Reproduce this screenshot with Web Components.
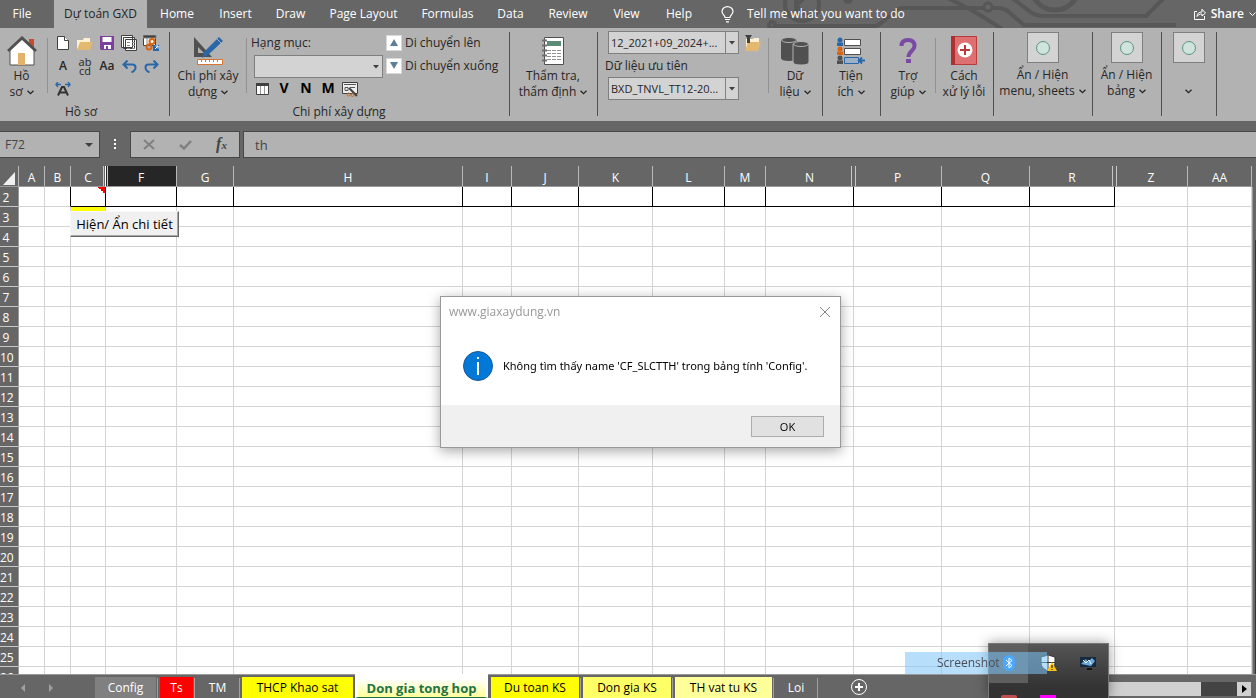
<!DOCTYPE html>
<html lang="vi">
<head>
<meta charset="utf-8">
<title>Dự toán GXD</title>
<style>
html,body{margin:0;height:100%}
body{font:12px/16px "Open Sans","Noto Sans",sans-serif;color:#262626;background:#666;overflow:hidden}
</style>
</head>
<body>
<gxd-workbook></gxd-workbook>

<script>
const BASE = `<style>
*{box-sizing:border-box}
:host{display:block}
button,select,input{font:inherit;color:inherit;margin:0;padding:0;border:0;background:none;border-radius:0}
svg{display:block}
</style>`;

function define(name, markup, setup) {
  const template = document.createElement('template');
  template.innerHTML = BASE + markup;
  customElements.define(name, class extends HTMLElement {
    connectedCallback() {
      if (this.shadowRoot) return;
      const root = this.attachShadow({ mode: 'open' });
      root.append(template.content.cloneNode(true));
      if (setup) setup(root, this);
    }
  });
}

/* ---------- menu bar ---------- */
define('menu-tab', `<style>
:host{display:flex;flex:0 0 auto;width:var(--w)}
button{flex:1;color:#fff;text-align:center;white-space:nowrap}
:host([active]) button{background:#b2b2b2;color:#262626}
</style><button type="button" role="tab"><slot></slot></button>`);

define('menu-bar', `<style>
:host{position:relative;background:#666;color:#fff;overflow:hidden}
.art{position:absolute;right:0;top:0}
nav{position:relative;display:flex;height:28px}
.file{margin-right:10px}
.tell{display:flex;align-items:center;gap:13px;padding:0 0 0 16px;white-space:nowrap}
.share{display:flex;align-items:center;gap:5px;margin-left:auto;font-weight:600;white-space:nowrap}
</style>
<svg class="art" width="516" height="28" viewBox="0 0 516 28" fill="none" stroke="#575757" stroke-width="4" aria-hidden="true">
<circle cx="62" cy="4" r="17"/><path d="M56 14V-2M56 6l12 10M56 6L68-6" stroke-width="4"/>
<circle cx="32" cy="25" r="3"/><path d="M36 26h98q4 0 7-3l12-10q5-5 10-5h80"/><circle cx="248" cy="7" r="4" stroke-width="3"/>
<path d="M252 8h8q6 1 10 5l14 12h152M208-2q20 10 32 17l22 14M272-2l20 15q5 3 9 3h105l20-20"/>
<circle cx="315" cy="-14" r="24" stroke-width="5"/><circle cx="108" cy="-1" r="3"/>
</svg>
<nav>
<menu-tab class="file" style="--w:44px">File</menu-tab>
<menu-tab active style="--w:93px">Dự toán GXD</menu-tab>
<menu-tab style="--w:60px">Home</menu-tab>
<menu-tab style="--w:57px">Insert</menu-tab>
<menu-tab style="--w:53px">Draw</menu-tab>
<menu-tab style="--w:93px">Page Layout</menu-tab>
<menu-tab style="--w:75px">Formulas</menu-tab>
<menu-tab style="--w:51px">Data</menu-tab>
<menu-tab style="--w:64px">Review</menu-tab>
<menu-tab style="--w:53px">View</menu-tab>
<menu-tab style="--w:52px">Help</menu-tab>
<button type="button" class="tell">
<svg width="13" height="17" viewBox="0 0 13 17" fill="none" stroke="#fff" stroke-width="1.2"><path d="M4 11.500C4 9 1 8.500 1 5.500a5.500 4.900 0 0 1 11 0c0 3-3 3.500-3 6zM4 13.500h5M5 15.800h3"/></svg>
<span>Tell me what you want to do</span></button>
<button type="button" class="share">
<svg width="12" height="12" viewBox="0 0 12 12" fill="none" stroke="#fff"><path d="M3 3.500H.5v8h10V8M3 8.500c0-3 2-4.500 5-4.500V1.200L11.500 5 8 8V6C5.500 6 4 6.800 3 8.500z"/></svg>
<span>Share</span>
<svg width="7" height="5" viewBox="0 0 7 5" fill="none" stroke="#fff"><path d="M.5.500l3 3 3-3"/></svg></button>
</nav>`);

/* ---------- ribbon parts ---------- */
define('ribbon-group', `<style>
:host{display:flex;flex:0 0 auto;width:var(--w);flex-direction:column;position:relative;padding-right:2px}
:host::after{content:"";position:absolute;right:0;top:4px;bottom:5px;width:1px;background:#505050}
.body{display:flex;height:76px}
.cap{text-align:center}
</style><div class="body"><slot></slot></div><div class="cap"><slot name="caption"></slot></div>`);

define('ribbon-rule', `<style>
:host{width:1px;flex:0 0 auto;margin-top:10px;height:55px;background:#919191}
</style>`);

define('big-button', `<style>
:host{display:flex;flex:1 1 0;min-width:0}
button{flex:1;min-width:0;display:flex;flex-direction:column;align-items:center;padding-top:5px;white-space:nowrap}
.icon{height:35px;display:flex;align-items:center}
.line{display:flex;align-items:center;justify-content:center;gap:4px;height:16px}
:host([boxed]) button{padding-top:4px}
:host([boxed]) .icon{width:32px;height:31px;justify-content:center;border:1px solid #7f7f7f;background:#d3d3d3;margin-bottom:4px}
:host([plain]) .arrow{display:none}
</style><button type="button"><span class="icon"><slot name="icon"></slot></span>
<span class="line"><slot name="top"></slot></span>
<span class="line"><slot></slot><svg class="arrow" width="7" height="5" viewBox="0 0 7 5" fill="none" stroke="#262626" stroke-width="1.300"><path d="M.5.700l3 3 3-3"/></svg></span></button>`);

define('icon-button', `<style>
:host{display:flex}
button{width:22px;height:22px;display:flex;align-items:center;justify-content:center;font-weight:600;line-height:10px}
:host([strong]) button{font-weight:700;font-size:14px;color:#000;padding-bottom:2px}
:host([pair]) button{font-size:11px;line-height:9px;font-weight:400}
</style><button type="button"><slot></slot></button>`);

define('move-button', `<style>
:host{display:flex}
button{display:flex;align-items:center;gap:3px;height:23px;white-space:nowrap}
i{width:16px;height:16px;background:#fff;border:1px solid #d8d8d8;display:grid;place-items:center}
</style><button type="button"><i><slot name="icon"></slot></i><slot></slot></button>`);

define('combo-box', `<style>
:host{display:grid;height:23px;width:var(--w)}
select,svg{grid-area:1/1}
select{appearance:none;width:100%;height:100%;border:1px solid #7f7f7f;background:#d3d3d3;padding:0 16px 0 2px;outline:0;font-size:11px}
svg{justify-self:end;pointer-events:none}
line{stroke:#7f7f7f}
:host(:not([split])) line{display:none}
</style><select><option></option></select>
<svg width="15" height="23" viewBox="0 0 15 23"><line x1="1.500" y1="0" x2="1.500" y2="23"/><path d="M5 10h6l-3 3.500z" fill="#404040"/></svg>`,
(root, host) => {
  root.querySelector('option').textContent = host.getAttribute('value') || '';
  root.querySelector('select').setAttribute('aria-label', host.getAttribute('label'));
});

const toggleIcon = '<svg slot="icon" width="16" height="16" viewBox="0 0 16 16"><circle cx="8" cy="8" r="6.500" fill="#d0e3dc" stroke="#5a9582"/></svg>';

define('ribbon-bar', `<style>
:host{display:flex;background:#b2b2b2;height:93px;overflow:hidden}
.tools{display:grid;grid-template-columns:repeat(5,22px);grid-auto-rows:23px;margin:4px 0 0 4px}
.item{display:grid;grid-template-rows:22px 24px 22px;margin:4px 0 0 4px;width:132px;align-items:center}
.item combo-box{margin-left:3px}
.marks{display:flex}
.moves{display:flex;flex-direction:column;margin:3px 0 0 3px}
.prio{display:grid;grid-template-columns:131px 22px;grid-auto-rows:23px;align-items:center;margin:3px 4px 0 7px;padding-left:3px;flex:none;column-gap:3px}
.prio span{margin-left:-3px}
</style>
<ribbon-group style="--w:170px">
<big-button style="flex:0 0 43px"><svg slot="icon" width="30" height="30" viewBox="0 0 30 30"><path d="M22 3h5v9l-5-5z" fill="#c94a2d"/><path d="M3 13L15 2l12 11v16H3z" fill="#fff" stroke="#505050"/><path d="M1 15L15 2l14 13" fill="none" stroke="#505050" stroke-width="3"/><path d="M11 17h7v12h-7z" fill="#e3b36c"/></svg><span slot="top">Hồ</span>sơ</big-button>
<ribbon-rule style="margin-left:4px"></ribbon-rule>
<div class="tools">
<icon-button><svg width="12" height="14" viewBox="0 0 12 14" fill="#fff" stroke="#404040"><path d="M.5.500h7l4 4v9H.5z"/><path d="M7.500.500v4h4"/></svg></icon-button>
<icon-button><svg width="16" height="13" viewBox="0 0 16 13"><path d="M0 12V3h6l1-2h6v4" fill="#fff0d4"/><path d="M0 13l3-8h13l-3 8z" fill="#e3b870"/></svg></icon-button>
<icon-button><svg width="14" height="14" viewBox="0 0 14 14"><path d="M0 0h14v14H1l-1-1z" fill="#7b3f9d"/><path d="M2.500 1h9v5h-9zM4 9h7v4H8v-3H6v3H4z" fill="#fff"/></svg></icon-button>
<icon-button><svg width="16" height="16" viewBox="0 0 16 16" fill="#fff" stroke="#404040"><path d="M.5.500h11v12H.5zM2.500 2.500h11v11h-11zM4.500 4.500h11v11h-11z"/><path d="M6 7.500h3m2 0h3M6 10.500h3m2 0h3M6 13.500h3m2 0h3" stroke="#888"/></svg></icon-button>
<icon-button><svg width="16" height="16" viewBox="0 0 16 16"><path d="M.5.500h12v10H.5z" fill="#fff" stroke="#404040"/><path d="M0 0h13v3H0zM4 3v7" fill="#404040" stroke="#888"/><circle cx="9" cy="6.500" r="2.500" fill="none" stroke="#d8660f" stroke-width="2"/><circle cx="6" cy="12" r="2.500" fill="none" stroke="#d8660f" stroke-width="2"/><path d="M10 10h6v6h-6z" fill="#2a67a8"/><path d="M12 14l3-3m-2.500 0H15v2.500" stroke="#fff" fill="none"/></svg></icon-button>
<icon-button>A</icon-button>
<icon-button pair>ab<br>cd</icon-button>
<icon-button>Aa</icon-button>
<icon-button><svg width="15" height="13" viewBox="0 0 15 13" fill="none" stroke="#2a67a8" stroke-width="2"><path d="M5.500.500L1.500 4.500l4 4M2 4.500h8.500q3 0 3 3t-4 5"/></svg></icon-button>
<icon-button><svg width="15" height="13" viewBox="0 0 15 13" fill="none" stroke="#2a67a8" stroke-width="2"><path d="M9.500.500l4 4-4 4M13 4.500H4.500q-3 0-3 3t4 5"/></svg></icon-button>
<icon-button><svg width="16" height="14" viewBox="0 0 16 14" fill="none"><path d="M3 13.500l4-8.500h2l4 8.500M5 10.500h6" stroke="#333" stroke-width="2"/><path d="M3 0L1 2.500 3 5M1 2.500h5M13 0l2 2.500L13 5M15 2.500h-5" stroke="#2a67a8" stroke-width="1.400"/></svg></icon-button>
</div><span slot="caption" style="margin-right:6px">Hồ sơ</span></ribbon-group>

<ribbon-group style="--w:340px">
<big-button style="flex:0 0 76px"><svg slot="icon" width="32" height="30" viewBox="0 0 32 30"><path d="M2 1v20h18zM6 11l6 6H6z" fill="#505050" fill-rule="evenodd"/><path d="M10 22l2-6L27 1l4 4-15 14z" fill="#2a67a8"/><path d="M25 3l4 4" stroke="#b2b2b2"/><path d="M5.500 23.500h25v5h-25z" fill="#fff" stroke="#d8762f"/><path d="M9.500 24v2m4-2v2m4-2v2m4-2v2m4-2v2" stroke="#d8762f"/></svg><span slot="top">Chi phí xây</span>dựng</big-button>
<ribbon-rule></ribbon-rule>
<div class="item"><span>Hạng mục:</span><combo-box label="Hạng mục" value="" style="--w:129px"></combo-box>
<div class="marks"><icon-button><svg width="13" height="12" viewBox="0 0 13 12"><path d="M.5.500h12v11H.5z" fill="#fff" stroke="#404040"/><path d="M0 0h13v3H0z" fill="#404040"/><path d="M4.500 3v8m4-8v8" stroke="#999"/></svg></icon-button>
<icon-button strong>V</icon-button><icon-button strong>N</icon-button><icon-button strong>M</icon-button>
<icon-button><svg width="16" height="15" viewBox="0 0 16 15"><path d="M.5.500h15v11H.5z" fill="#eee" stroke="#404040"/><path d="M2 2.500h12M3 5.500h3v3H3zM8 5.500h5" stroke="#555" fill="none"/><path d="M7 6l8 8" stroke="#404040" stroke-width="2"/><circle cx="6.500" cy="12.500" r="1.500" fill="none" stroke="#d8660f"/><circle cx="10.500" cy="13" r="1.500" fill="none" stroke="#d8660f"/></svg></icon-button></div></div>
<div class="moves">
<move-button><svg slot="icon" width="8" height="7" viewBox="0 0 8 7"><path d="M4 0l4 7H0z" fill="#5f7f98"/></svg>Di chuyển lên</move-button>
<move-button><svg slot="icon" width="8" height="7" viewBox="0 0 8 7"><path d="M4 7l4-7H0z" fill="#5f7f98"/></svg>Di chuyển xuống</move-button>
</div><span slot="caption">Chi phí xây dựng</span></ribbon-group>

<ribbon-group style="--w:88px">
<big-button><svg slot="icon" width="24" height="30" viewBox="0 0 24 30"><path d="M3.500 1.500h19v27h-19z" fill="#fff" stroke="#505050"/><path d="M6 5h14v5H6z" fill="#5a8c78"/><path d="M6 14.500h14M6 17.500h14M6 20.500h14M6 23.500h14" stroke="#909090" stroke-dasharray="4 1"/><path d="M1 4.500h5M1 9.500h5M1 14.500h5M1 19.500h5M1 24.500h5" stroke="#707070" stroke-width="2"/></svg><span slot="top">Thẩm tra,</span>thẩm định</big-button></ribbon-group>

<ribbon-group style="--w:225px">
<div class="prio"><combo-box split label="Bộ đơn giá" value="12_2021+09_2024+..." style="--w:131px"></combo-box><icon-button><svg width="16" height="16" viewBox="0 0 16 16"><path d="M1 15V4h7l1-1h5v4" fill="#fff0d4"/><path d="M0 16l3-9h13l-3 9z" fill="#e3b870"/><path d="M0 0h7L5 3v5H2V3z" fill="#404040"/></svg></icon-button>
<span>Dữ liệu ưu tiên</span><i></i><combo-box split label="Dữ liệu ưu tiên" value="BXD_TNVL_TT12-20..." style="--w:131px"></combo-box></div>
<ribbon-rule></ribbon-rule>
<big-button><svg slot="icon" width="28" height="30" viewBox="0 0 28 30" fill="#505050"><path d="M0 4v18q0 3 8 3t8-3V4z"/><ellipse cx="8" cy="4" rx="7.500" ry="2.500" stroke="#b2b2b2"/><path d="M12 8v18q0 3 8 3t8-3V8z" stroke="#b2b2b2"/><ellipse cx="20" cy="8" rx="7.500" ry="2.500" stroke="#b2b2b2"/></svg><span slot="top">Dữ</span>liệu</big-button></ribbon-group>

<ribbon-group style="--w:58px">
<big-button><svg slot="icon" width="28" height="28" viewBox="0 0 28 28"><g stroke="#505050" fill="#fff"><path d="M7.500 2.500h16v6h-16zM7.500 11.500h16v6h-16z"/><path d="M7.500 20.500h14v6h-14z" fill="#9db0c5" stroke="#2a67a8"/></g><g fill="#2a67a8"><circle cx="3" cy="3" r="2.500"/><path d="M0 9V5.500h6V9z"/></g><g fill="#d8660f"><circle cx="3" cy="12" r="2.500"/><path d="M0 18v-3.500h6V18z"/></g><g fill="#505050"><circle cx="3" cy="21" r="2.500"/><path d="M0 27v-3.500h6V27z"/></g><path d="M28 23.500h-6m3-3l-3 3 3 3" fill="none" stroke="#2a67a8" stroke-width="2"/></svg><span slot="top">Tiện</span>ích</big-button></ribbon-group>

<ribbon-group style="--w:113px">
<big-button style="flex:0 0 54px"><svg slot="icon" width="18" height="26" viewBox="0 0 18 26"><path d="M2.500 8Q2.500 2 9 2t6.500 6c0 5-6 5-6 11" fill="none" stroke="#7b4aa5" stroke-width="4"/><path d="M7 21h5v4H7z" fill="#7b4aa5"/></svg><span slot="top">Trợ</span>giúp</big-button>
<ribbon-rule></ribbon-rule>
<big-button plain><svg slot="icon" width="26" height="29" viewBox="0 0 26 29"><path d="M.5.500h25v28H.5z" fill="#dd7070" stroke="#b83a3a"/><path d="M0 0h4v29H0z" fill="#b03030"/><circle cx="14" cy="14" r="7.500" fill="#fff"/><path d="M14 9v10M9 14h10" stroke="#b83a3a" stroke-width="2"/></svg><span slot="top">Cách</span>xử lý lỗi</big-button></ribbon-group>

<ribbon-group style="--w:99px"><big-button boxed>${toggleIcon}<span slot="top">Ẩn / Hiện</span>menu, sheets</big-button></ribbon-group>
<ribbon-group style="--w:69px"><big-button boxed>${toggleIcon}<span slot="top">Ẩn / Hiện</span>bảng</big-button></ribbon-group>
<ribbon-group style="--w:55px"><big-button boxed>${toggleIcon}</big-button></ribbon-group>
`);

/* ---------- formula bar ---------- */
define('formula-bar', `<style>
:host{display:flex;height:45px;padding:10px 0 8px;color:#444}
.name,.cmds,.fx{display:flex;align-items:center;height:27px;background:#b2b2b2;border:1px solid #474747}
.name{width:100px;border-left:0;padding:0 6px 0 5px}
input{min-width:0;flex:1;outline:0;width:100%}
.dots{width:30px;display:grid;place-items:center;height:27px}
.cmds{width:110px;justify-content:space-around}
.fx{flex:1;margin-left:3px;border-right:0;padding-left:11px}
.fx input{font-size:13px}
.f{font:italic 700 16px/20px "Liberation Serif",serif}
.f small{font-size:11px}
</style>
<div class="name"><input aria-label="Name box" value="F72"><svg width="8" height="4" viewBox="0 0 8 4"><path d="M0 0h8L4 4z" fill="#404040"/></svg></div>
<div class="dots"><svg width="3" height="11" viewBox="0 0 3 11" fill="#fff"><path d="M0 0h2v2H0zM0 4h2v2H0zM0 8h2v2H0z"/></svg></div>
<div class="cmds"><button type="button" aria-label="Cancel"><svg width="12" height="11" viewBox="0 0 12 11" stroke="#808080" stroke-width="2"><path d="M1 1l10 9M11 1L1 10"/></svg></button>
<button type="button" aria-label="Enter"><svg width="13" height="10" viewBox="0 0 13 10" fill="none" stroke="#808080" stroke-width="2.500"><path d="M1 5l4 3.500L12 1"/></svg></button>
<button type="button" class="f">f<small>x</small></button></div>
<div class="fx"><input aria-label="Formula" value="th"></div>`);

/* ---------- cell grid ---------- */
define('sheet-grid', `<style>
:host{flex:1;min-height:0;position:relative;overflow:hidden;padding-right:4px}
table{width:100%;table-layout:fixed;border-spacing:0;border-collapse:separate;background:#fff}
th{font-weight:400;color:#fff;background:#666;padding:2px 0 0;line-height:17px;overflow:hidden;white-space:nowrap}
thead th{height:21px;border-right:1px solid #b8b8b8;border-bottom:1px solid #999;line-height:16px;padding-top:4px}
tbody th{height:20px;border-right:1px solid #999;border-bottom:1px solid #c8c8c8}
tbody th span{display:block;width:12px;text-align:center}
td{height:20px;padding:0;border-right:1px solid #d4d4d4;border-bottom:1px solid #d4d4d4}
.sel{background:#262626}
.hid{background:linear-gradient(#c8c8c8,#c8c8c8) right 1px top/1px 100% no-repeat #666;border-right-color:#666}
.after{background:linear-gradient(#c8c8c8,#c8c8c8) 1px 0/1px 100% no-repeat #666}
.sel.after{background-color:#262626}
.edge{border-right-color:#fff}
.box{border-color:#000}
.lead{border-right-color:#000}
.mark{background:linear-gradient(#ff0,#ff0) 0 0/100% 4px no-repeat}
.note{background:linear-gradient(45deg,transparent 50%,red 50%) right top/7px 7px no-repeat}
.corner svg{margin-left:3px}
.toggle{position:absolute;left:70px;top:45px;height:26px;width:109px;background:#f0f0f0;color:#000;border:1px solid #f8f8f8;border-color:#f8f8f8 #666 #666 #f8f8f8;box-shadow:inset -1px -1px #a8a8a8;font-size:13px;white-space:nowrap}
.vbar{position:absolute;right:0;top:21px;bottom:0;width:4px;background:#666;border-left:1px solid #999}
.vbar i{position:absolute;right:0;top:53px;bottom:0;width:1px;background:#333}
</style><table><colgroup></colgroup><thead><tr></tr></thead><tbody></tbody></table>
<div class="vbar"><i></i></div>
<button type="button" class="toggle">Hiện/ Ẩn chi tiết</button>`,
root => {
  const columns = [['A',26],['B',26],['C',35],['F',71],['G',57],['H',229],['I',49],['J',67],['K',74],['L',72],['M',41],['N',88],['P',88],['Q',88],['R',85],['Z',73],['AA',0]];
  const headClass = { C: 'hid edge', F: 'sel after', N: 'hid', P: 'after', R: 'hid', Z: 'after' };
  root.querySelector('colgroup').innerHTML = '<col style="width:19px">' +
    columns.map(([, w]) => w ? `<col style="width:${w}px">` : '<col>').join('');
  root.querySelector('thead tr').innerHTML =
    '<th class="corner" aria-label="Select all"><svg width="12" height="13" viewBox="0 0 12 13"><path d="M12 0v13H0z" fill="#f0f0f0"/></svg></th>' +
    columns.map(([c]) => `<th class="${headClass[c] || ''}">${c}</th>`).join('');
  let html = '';
  for (let r = 2; r <= 26; r++) {
    html += `<tr><th><span>${r}</span></th>` + columns.map(([c], i) => {
      let cls = '';
      if (r === 2) cls = c === 'B' ? 'lead' : i >= 2 && i <= 14 ? 'box' : '';
      if (r === 2 && c === 'C') cls += ' note';
      if (r === 3 && c === 'C') cls = 'mark';
      return `<td class="${cls}"></td>`;
    }).join('') + '</tr>';
  }
  root.querySelector('tbody').innerHTML = html;
});

/* ---------- sheet tabs ---------- */
define('sheet-tab', `<style>
:host{display:flex;width:var(--w);height:21px;margin-top:2px;flex:none}
button{flex:1;background:var(--bg,#666);color:var(--fg,#fff);white-space:nowrap;padding-top:1px}
:host([active]){height:24px;margin-top:-1px}
:host([active]) button{background:linear-gradient(#fff 20%,#ffff99);border:solid #fff;border-width:0 3px;border-bottom:1px solid #217346;color:#217346;font-size:13px;font-weight:700;padding-top:4px}
</style><button type="button" role="tab"><slot></slot></button>`);

define('sheet-tabs', `<style>
:host{display:flex;height:24px;border-top:1px solid #999;background:#666;flex:none}
.nav{width:95px;display:flex;align-items:center;gap:22px;padding:2px 0 0 20px}
.gap{width:1px;height:20px;margin:3px 2px 0 1px;background:#a0a0a0;flex:none}
.add{margin:3px 0 0 30px;align-self:flex-start}
.hscroll{display:flex;margin:7px 5px 0 auto;height:14px;width:143px}
.thumb{flex:1;background:#d0d0d0}.track{width:36px;background:#444}
.hscroll button{width:14px;background:#d0d0d0;display:grid;place-items:center}
</style>
<div class="nav"><svg width="6" height="8" viewBox="0 0 6 8"><path d="M5 0v8L1 4z" fill="#a0a0a0"/></svg><svg width="6" height="8" viewBox="0 0 6 8"><path d="M1 0v8l4-4z" fill="#a0a0a0"/></svg></div>
<sheet-tab style="--w:61px;--bg:#808080">Config</sheet-tab><i class="gap"></i>
<sheet-tab style="--w:33px;--bg:#f00">Ts</sheet-tab><i class="gap"></i>
<sheet-tab style="--w:41px">TM</sheet-tab><i class="gap"></i>
<sheet-tab style="--w:111px;--bg:#ff0;--fg:#000">THCP Khao sat</sheet-tab><i style="width:2px"></i>
<sheet-tab active style="--w:133px">Don gia tong hop</sheet-tab><i style="width:3px"></i>
<sheet-tab style="--w:88px;--bg:#ff0;--fg:#000">Du toan KS</sheet-tab><i class="gap"></i>
<sheet-tab style="--w:88px;--bg:#ffff66;--fg:#000">Don gia KS</sheet-tab><i class="gap"></i>
<sheet-tab style="--w:97px;--bg:#ffff99;--fg:#000">TH vat tu KS</sheet-tab><i class="gap"></i>
<sheet-tab style="--w:40px">Loi</sheet-tab><i class="gap"></i>
<button type="button" class="add" aria-label="New sheet"><svg width="18" height="18" viewBox="0 0 18 18" fill="none" stroke="#fff"><circle cx="9" cy="9" r="7.500"/><path d="M9 5v8M5 9h8" stroke-width="2"/></svg></button>
<div class="hscroll"><i class="thumb"></i><i class="track"></i><button type="button" aria-label="Scroll right"><svg width="5" height="8" viewBox="0 0 5 8"><path d="M0 0v8l5-4z"/></svg></button></div>`);

/* ---------- message box ---------- */
define('message-box', `<style>
:host{position:fixed;left:calc(50% - 188px);top:296px;width:401px;background:#fff;border:1px solid #999;box-shadow:0 3px 12px rgba(0,0,0,.35);color:#000}
header{display:flex;align-items:center;justify-content:space-between;height:30px;padding:0 9px 0 8px;color:#999}
.msg{display:flex;align-items:center;gap:10px;height:78px;padding:0 0 0 22px;white-space:nowrap;font-size:11px;font-family:"Noto Sans",sans-serif}
footer{display:flex;justify-content:flex-end;background:#f0f0f0;padding:11px 16px 10px}
footer button{width:73px;height:21px;background:#e1e1e1;border:1px solid #adadad;font-size:11px}
</style><header><span>www.giaxaydung.vn</span><button type="button" aria-label="Close"><svg width="12" height="12" viewBox="0 0 12 12" stroke="#808080"><path d="M1 1l10 10M11 1L1 11"/></svg></button></header>
<div class="msg"><svg width="30" height="30" viewBox="0 0 30 30"><circle cx="15" cy="15" r="14.500" fill="#0078d7" stroke="#1a5a96"/><path d="M15 11v13M15 6v2" stroke="#fff" stroke-width="2"/></svg><slot></slot></div>
<footer><button type="button">OK</button></footer>`);

/* ---------- tray flyout ---------- */
define('tray-flyout', `<style>
:host{position:fixed;right:147px;bottom:0;width:204px;height:55px}
.panel{position:absolute;right:0;top:0;width:121px;height:55px;display:grid;grid-template-columns:39px 40px 40px;grid-template-rows:39px 15px;place-items:center;background:linear-gradient(#555,#333 80%);border:1px solid #777;border-bottom:0;box-shadow:0 0 12px rgba(0,0,0,.4)}
.cell{width:39px;height:39px;background:#5e5e5e}
.drag{position:absolute;left:0;top:9px;width:142px;height:22px;background:rgba(124,196,250,.55);display:flex;align-items:center;gap:3px;padding-left:32px;color:#4d4d55}
.r{align-self:end}
</style>
<div class="panel"><i class="cell"></i>
<svg width="17" height="17" viewBox="0 0 17 17"><path d="M8 0l7 2v6q0 5-7 8-7-3-7-8V2z" fill="#fff" stroke="#333"/><path d="M8 1v14M1 7.500h14" stroke="#333"/><path d="M12 7l5 9H7z" fill="#ffc20e"/><path d="M12 10v3m0 1v1" stroke="#000"/></svg>
<svg width="16" height="14" viewBox="0 0 16 14"><path d="M0 0h16v10H0z" fill="#16293f"/><path d="M1 7l5-5 2 3 4-4 3 3-4 5z" fill="#6aa9e0"/><path d="M3 3l3 3 3-3 2 4" stroke="#fff" fill="none"/><path d="M7 11h5v2H7z" fill="#111"/></svg>
<svg class="r" width="16" height="3"><rect width="16" height="5" rx="2" fill="#c05050"/></svg><svg class="r" width="16" height="3"><path d="M0 0h16v3H0z" fill="#f0f"/></svg></div>
<div class="drag"><span>Screenshot</span><svg width="12" height="16" viewBox="0 0 12 16"><rect width="12" height="16" rx="6" fill="#4aa8ff"/><path d="M3 5l6 5.500L6 13V3l3 2.500L3 11" fill="none" stroke="#fff"/></svg></div>`);

define('gxd-workbook', `<style>
:host{display:flex;flex-direction:column;height:100vh}
</style>
<menu-bar></menu-bar><ribbon-bar></ribbon-bar><formula-bar></formula-bar><sheet-grid></sheet-grid><sheet-tabs></sheet-tabs>
<message-box role="dialog" aria-label="www.giaxaydung.vn">Không tìm thấy name 'CF_SLCTTH' trong bảng tính 'Config'.</message-box>
<tray-flyout></tray-flyout>`);
</script>
</body>
</html>
